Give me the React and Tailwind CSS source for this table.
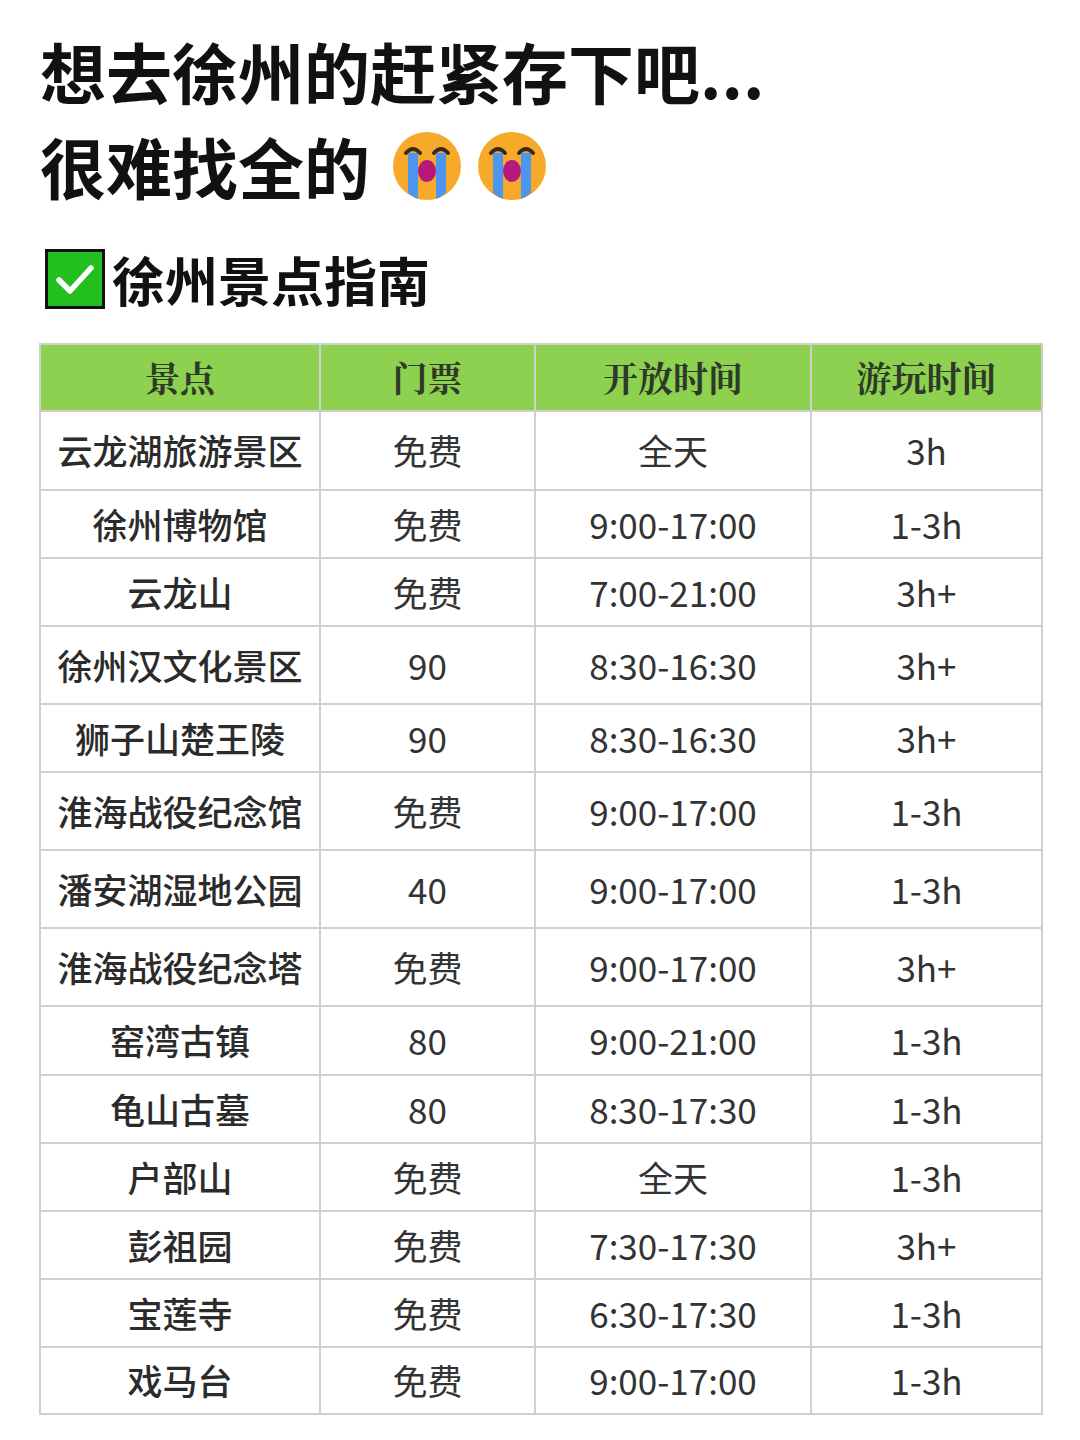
const rows = [
  ['云龙湖旅游景区', '免费', '全天', '3h', 'h-[79px]'],
  ['徐州博物馆', '免费', '9:00-17:00', '1-3h', 'h-[68px]'],
  ['云龙山', '免费', '7:00-21:00', '3h+', 'h-[68px]'],
  ['徐州汉文化景区', '90', '8:30-16:30', '3h+', 'h-[78px]'],
  ['狮子山楚王陵', '90', '8:30-16:30', '3h+', 'h-[68px]'],
  ['淮海战役纪念馆', '免费', '9:00-17:00', '1-3h', 'h-[78px]'],
  ['潘安湖湿地公园', '40', '9:00-17:00', '1-3h', 'h-[78px]'],
  ['淮海战役纪念塔', '免费', '9:00-17:00', '3h+', 'h-[78px]'],
  ['窑湾古镇', '80', '9:00-21:00', '1-3h', 'h-[69px]'],
  ['龟山古墓', '80', '8:30-17:30', '1-3h', 'h-[68px]'],
  ['户部山', '免费', '全天', '1-3h', 'h-[68px]'],
  ['彭祖园', '免费', '7:30-17:30', '3h+', 'h-[68px]'],
  ['宝莲寺', '免费', '6:30-17:30', '1-3h', 'h-[68px]'],
  ['戏马台', '免费', '9:00-17:00', '1-3h', 'h-[67px]'],
];

function CryFace() {
  return (
    <svg width="70" height="70" viewBox="0 0 70 70" className="inline-block">
      <circle cx="35" cy="35" r="34" fill="#f7a92a" />
      <path d="M14 22 Q21 14 28 22" stroke="#3a2a1a" strokeWidth="4" fill="none" strokeLinecap="round" />
      <path d="M42 22 Q49 14 56 22" stroke="#3a2a1a" strokeWidth="4" fill="none" strokeLinecap="round" />
      <path d="M16 22 L26 22 L26 68 Q21 66 16 62 Z" fill="#4d96f0" />
      <path d="M44 22 L54 22 L54 62 Q49 66 44 68 Z" fill="#4d96f0" />
      <ellipse cx="35" cy="40" rx="9" ry="11" fill="#b7197b" />
    </svg>
  );
}

function CheckBox() {
  return (
    <svg width="60" height="60" viewBox="0 0 60 60" className="shrink-0">
      <rect x="1.5" y="1.5" width="57" height="57" fill="#22bf1e" stroke="#111" strokeWidth="3" />
      <path d="M14 31 L25 42 L46 19" stroke="#fff" strokeWidth="5.5" fill="none" strokeLinecap="round" strokeLinejoin="round" />
    </svg>
  );
}

export default function App() {
  return (
    <div className="w-[1080px] h-[1440px] bg-white font-['Noto_Sans_CJK_SC',sans-serif] text-[#111]">
      <div className="pl-[40px] pt-[23px]">
        <h1 className="text-[66px] font-bold leading-[95px]">想去徐州的赶紧存下吧...</h1>
        <div className="flex items-center h-[95px]">
          <span className="text-[66px] font-bold leading-[95px]">很难找全的</span>
          <span className="ml-[22px] flex gap-[15px]">
            <CryFace />
            <CryFace />
          </span>
        </div>
      </div>
      <div className="flex items-center pl-[45px] mt-[26px] h-[80px] gap-[7px]">
        <CheckBox />
        <span className="text-[53px] font-bold leading-none">徐州景点指南</span>
      </div>
      <div className="pl-[39px] mt-[24px]">
        <table className="border-collapse text-[#333] text-[35px]">
          <colgroup>
            <col className="w-[280px]" />
            <col className="w-[215px]" />
            <col className="w-[276px]" />
            <col className="w-[231px]" />
          </colgroup>
          <thead>
            <tr className="h-[67px] bg-[#8ed150]">
              {['景点', '门票', '开放时间', '游玩时间'].map((t) => (
                <th key={t} className="border-2 border-[#cfcfcf] text-center font-bold text-[35px] text-[#2e3a28] font-['Noto_Serif_CJK_SC','Liberation_Serif','Noto_Sans_CJK_SC',serif]">
                  {t}
                </th>
              ))}
            </tr>
          </thead>
          <tbody>
            {rows.map((r) => (
              <tr key={r[0]} className={r[4]}>
                <td className="border-2 border-[#cfcfcf] text-center font-medium text-[#2b2b2b]">{r[0]}</td>
                <td className="border-2 border-[#cfcfcf] text-center">{r[1]}</td>
                <td className="border-2 border-[#cfcfcf] text-center">{r[2]}</td>
                <td className="border-2 border-[#cfcfcf] text-center">{r[3]}</td>
              </tr>
            ))}
          </tbody>
        </table>
      </div>
    </div>
  );
}
